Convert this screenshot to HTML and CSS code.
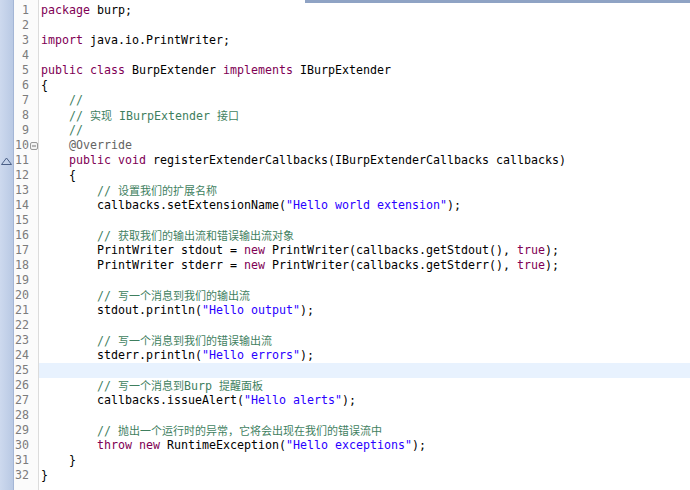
FILE: index.html
```html
<!DOCTYPE html>
<html>
<head>
<meta charset="utf-8">
<link rel="stylesheet" href="styles.css">
</head>
<body>
<div class="editor">
  <div class="topbar"></div>
  <div class="ruler">
    <div class="r"></div><div class="r"></div><div class="r"></div><div class="r"></div><div class="r"></div><div class="r"></div><div class="r"></div><div class="r"></div><div class="r"></div><div class="r"></div>
    <div class="r"><svg class="tri" width="11" height="8" viewBox="0 0 11 8"><path d="M0.5 7.5 L5.5 1 L10.5 7.5 Z" fill="none" stroke="#4a5f86" stroke-width="1"/></svg></div>
  </div>
  <div class="gutter">
    <div class="g"><span class="n">1</span><span class="f"></span></div>
    <div class="g"><span class="n">2</span><span class="f"></span></div>
    <div class="g"><span class="n">3</span><span class="f"></span></div>
    <div class="g"><span class="n">4</span><span class="f"></span></div>
    <div class="g"><span class="n">5</span><span class="f"></span></div>
    <div class="g"><span class="n">6</span><span class="f"></span></div>
    <div class="g"><span class="n">7</span><span class="f"></span></div>
    <div class="g"><span class="n">8</span><span class="f"></span></div>
    <div class="g"><span class="n">9</span><span class="f"></span></div>
    <div class="g"><span class="n">10</span><span class="f"><svg width="8" height="8" viewBox="0 0 8 8"><rect x="0.5" y="0.5" width="7" height="7" rx="1.5" fill="#f4f4f4" stroke="#9a9a9a"/><path d="M2 4 H6" stroke="#777" stroke-width="1"/></svg></span></div>
    <div class="g"><span class="n">11</span><span class="f"></span></div>
    <div class="g"><span class="n">12</span><span class="f"></span></div>
    <div class="g"><span class="n">13</span><span class="f"></span></div>
    <div class="g"><span class="n">14</span><span class="f"></span></div>
    <div class="g"><span class="n">15</span><span class="f"></span></div>
    <div class="g"><span class="n">16</span><span class="f"></span></div>
    <div class="g"><span class="n">17</span><span class="f"></span></div>
    <div class="g"><span class="n">18</span><span class="f"></span></div>
    <div class="g"><span class="n">19</span><span class="f"></span></div>
    <div class="g"><span class="n">20</span><span class="f"></span></div>
    <div class="g"><span class="n">21</span><span class="f"></span></div>
    <div class="g"><span class="n">22</span><span class="f"></span></div>
    <div class="g"><span class="n">23</span><span class="f"></span></div>
    <div class="g"><span class="n">24</span><span class="f"></span></div>
    <div class="g"><span class="n">25</span><span class="f"></span></div>
    <div class="g"><span class="n">26</span><span class="f"></span></div>
    <div class="g"><span class="n">27</span><span class="f"></span></div>
    <div class="g"><span class="n">28</span><span class="f"></span></div>
    <div class="g"><span class="n">29</span><span class="f"></span></div>
    <div class="g"><span class="n">30</span><span class="f"></span></div>
    <div class="g"><span class="n">31</span><span class="f"></span></div>
    <div class="g"><span class="n">32</span><span class="f"></span></div>
  </div>
  <div class="code">
<div class="l"><span class="k">package</span> burp;</div>
<div class="l"></div>
<div class="l"><span class="k">import</span> java.io.PrintWriter;</div>
<div class="l"></div>
<div class="l"><span class="k">public</span> <span class="k">class</span> BurpExtender <span class="k">implements</span> IBurpExtender</div>
<div class="l">{</div>
<div class="l">    <span class="c">//</span></div>
<div class="l">    <span class="c">// <span class="cjk">实现</span> IBurpExtender <span class="cjk">接口</span></span></div>
<div class="l">    <span class="c">//</span></div>
<div class="l">    <span class="a">@Override</span></div>
<div class="l">    <span class="k">public</span> <span class="k">void</span> registerExtenderCallbacks(IBurpExtenderCallbacks callbacks)</div>
<div class="l">    {</div>
<div class="l">        <span class="c">// <span class="cjk">设置我们的扩展名称</span></span></div>
<div class="l">        callbacks.setExtensionName(<span class="s">"Hello world extension"</span>);</div>
<div class="l"></div>
<div class="l">        <span class="c">// <span class="cjk">获取我们的输出流和错误输出流对象</span></span></div>
<div class="l">        PrintWriter stdout = <span class="k">new</span> PrintWriter(callbacks.getStdout(), <span class="k">true</span>);</div>
<div class="l">        PrintWriter stderr = <span class="k">new</span> PrintWriter(callbacks.getStderr(), <span class="k">true</span>);</div>
<div class="l"></div>
<div class="l">        <span class="c">// <span class="cjk">写一个消息到我们的输出流</span></span></div>
<div class="l">        stdout.println(<span class="s">"Hello output"</span>);</div>
<div class="l"></div>
<div class="l">        <span class="c">// <span class="cjk">写一个消息到我们的错误输出流</span></span></div>
<div class="l">        stderr.println(<span class="s">"Hello errors"</span>);</div>
<div class="l cur"></div>
<div class="l">        <span class="c">// <span class="cjk">写一个消息到</span>Burp <span class="cjk">提醒面板</span></span></div>
<div class="l">        callbacks.issueAlert(<span class="s">"Hello alerts"</span>);</div>
<div class="l"></div>
<div class="l">        <span class="c">// <span class="cjk">抛出一个运行时的异常，它将会出现在我们的错误流中</span></span></div>
<div class="l">        <span class="k">throw</span> <span class="k">new</span> RuntimeException(<span class="s">"Hello exceptions"</span>);</div>
<div class="l">    }</div>
<div class="l">}</div>
  </div>
</div>
</body>
</html>
```

FILE: styles.css
```css
html, body {
  margin: 0;
  padding: 0;
  background: #ffffff;
  width: 690px;
  height: 490px;
  overflow: hidden;
}

.editor {
  position: relative;
  display: flex;
  height: 490px;
  font-family: "DejaVu Sans Mono", "Noto Sans CJK SC", monospace;
  font-size: 11.63px;
  line-height: 15px;
}

.topbar {
  position: absolute;
  top: 0;
  left: 305px;
  right: 0;
  height: 3px;
  background: #8fa3c4;
}

.ruler {
  width: 13px;
  flex: none;
  padding-top: 3px;
  background: linear-gradient(to right, #cdd9ee, #b9c9e4);
  border-right: 1px solid #a4b6d6;
}

.r {
  height: 15px;
  display: flex;
  align-items: center;
  justify-content: center;
}

.tri {
  display: block;
  margin-top: 1px;
}

.gutter {
  width: 24px;
  flex: none;
  padding-top: 3px;
  background: #fbfbfb;
  border-right: 1px solid #dcdcdc;
}

.g {
  height: 15px;
  display: flex;
}

.n {
  width: 15px;
  text-align: right;
  color: #7c7c7c;
  white-space: nowrap;
}

.f {
  width: 9px;
  display: flex;
  align-items: center;
  justify-content: center;
}

.f svg {
  display: block;
}

.code {
  flex: 1;
  padding-top: 3px;
  color: #000000;
}

.l {
  height: 15px;
  padding-left: 2px;
  white-space: pre;
}

.l.cur {
  background: #e8f2fe;
}

.k {
  color: #7f0055;
}

.s {
  color: #2a00ff;
}

.c {
  color: #3f7f5f;
}

.a {
  color: #646464;
}

.cjk {
  font-family: "Noto Sans CJK SC", sans-serif;
  font-size: 11px;
}
```
